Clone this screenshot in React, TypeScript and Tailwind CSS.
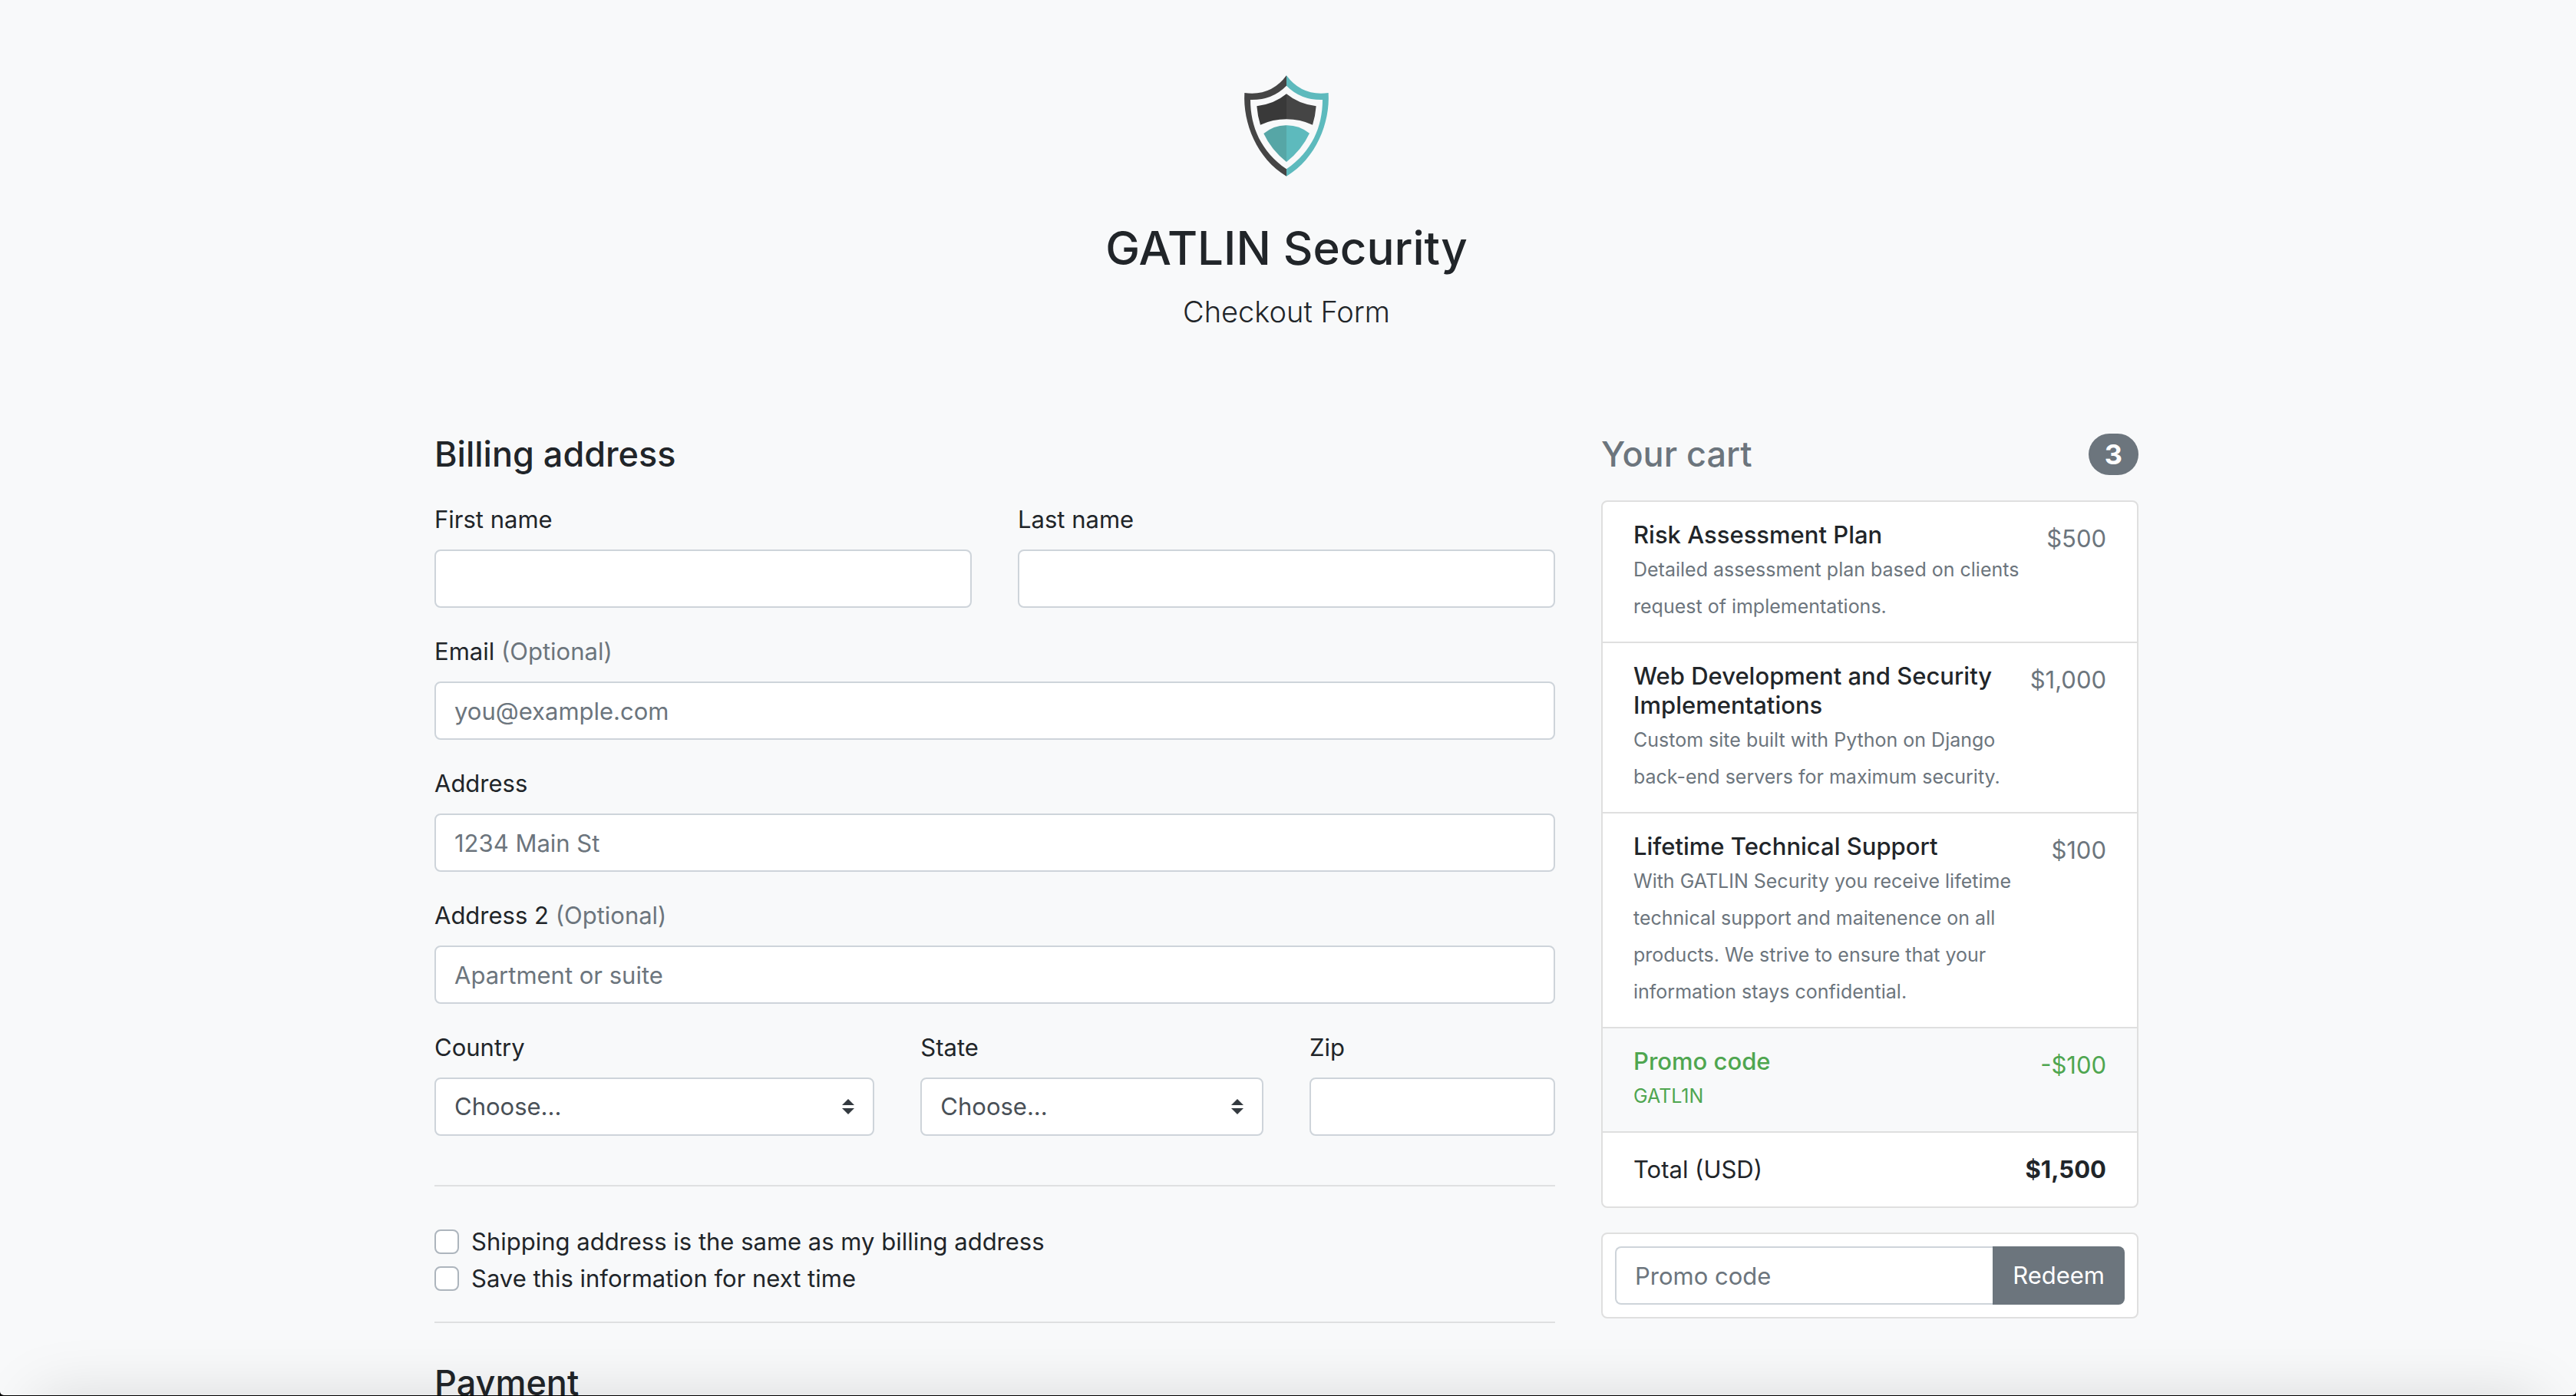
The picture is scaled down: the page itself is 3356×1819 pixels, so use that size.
import type { InputHTMLAttributes, ReactNode } from "react";

const control =
  "block h-[76px] w-full rounded-lg border-2 border-[#ced4da] bg-white px-6 text-[31px] text-[#495057] placeholder:text-[#6c757d] placeholder:opacity-100";

function Logo() {
  return (
    <svg className="mx-auto mb-[35px] h-[170px] w-[190px]" viewBox="3 0 570 510" role="img" aria-label="GATLIN Security shield">
      <path fill="#454545" d="M288 55Q228 137 124 123C117 240 172 380 288 449V421C188 352 147 255 147 150Q232 152 288 95Z" />
      <path fill="#5dbabd" d="M288 55Q348 137 452 123C459 240 404 380 288 449V421C388 352 429 255 429 150Q344 152 288 95Z" />
      <path fill="#393939" d="M288 127Q240 167 172 175Q175 213 186 248Q235 226 288 226Z" />
      <path fill="#454545" d="M288 127Q336 167 404 175Q401 213 390 248Q341 226 288 226Z" />
      <path fill="#56a6a6" d="M288 250Q240 249 199 282Q228 345 288 393Z" />
      <path fill="#5dbabd" d="M288 250Q336 249 378 281Q348 345 288 393Z" />
    </svg>
  );
}

type FieldProps = { id: string; label: string; optional?: boolean; className?: string; children: ReactNode };

function Field({ id, label, optional, className = "", children }: FieldProps) {
  return (
    <div className={`mb-8 ${className}`}>
      <label htmlFor={id} className="mb-[14px] block leading-[50px]">
        {label}
        {optional && <span className="text-[#6c757d]"> (Optional)</span>}
      </label>
      {children}
    </div>
  );
}

function TextInput(props: InputHTMLAttributes<HTMLInputElement>) {
  return <input type="text" className={control} {...props} />;
}

function Select({ id, options }: { id: string; options: string[] }) {
  return (
    <div className="relative">
      <select id={id} className={`${control} appearance-none`}>
        <option>Choose...</option>
        {options.map((o) => (
          <option key={o}>{o}</option>
        ))}
      </select>
      <svg className="pointer-events-none absolute top-7 right-[26px] h-5 w-4" viewBox="0 0 4 5" aria-hidden="true">
        <path fill="#343a40" d="M2 0L0 2h4zm0 5L0 3h4z" />
      </svg>
    </div>
  );
}

function Checkbox({ id, label }: { id: string; label: string }) {
  return (
    <div className="flex items-center gap-4">
      <input id={id} type="checkbox" className="size-8 appearance-none rounded-lg border-2 border-[#adb5bd] bg-white checked:bg-[#007bff]" />
      <label htmlFor={id} className="leading-[48px]">
        {label}
      </label>
    </div>
  );
}

const items = [
  { name: "Risk Assessment Plan", text: "Detailed assessment plan based on clients request of implementations.", price: "$500" },
  {
    name: "Web Development and Security Implementations",
    text: "Custom site built with Python on Django back-end servers for maximum security.",
    price: "$1,000",
  },
  {
    name: "Lifetime Technical Support",
    text: "With GATLIN Security you receive lifetime technical support and maitenence on all products. We strive to ensure that your information stays confidential.",
    price: "$100",
  },
];

export default function App() {
  return (
    <div className="h-screen overflow-hidden bg-black pb-px">
      <div className="relative h-full overflow-hidden rounded-b-[5px] bg-[#f8f9fa] pr-1 font-['Inter',sans-serif] text-[31px] text-[#212529]">
        <div className="mx-auto max-w-[2280px] px-[30px]">
          <header className="pt-20 pb-[126px] text-center">
            <Logo />
            <h1 className="mb-[14px] text-[60px] leading-[77px] font-medium">GATLIN Security</h1>
            <p className="text-[38px] leading-[60px] font-light">Checkout Form</p>
          </header>

          <div className="grid grid-cols-12 gap-x-[60px]">
            <main className="col-span-8">
              <h2 className="mb-[30px] text-[45px] leading-[60px] font-medium">Billing address</h2>
              <form>
                <div className="grid grid-cols-2 gap-x-[60px]">
                  <Field id="first" label="First name">
                    <TextInput id="first" />
                  </Field>
                  <Field id="last" label="Last name">
                    <TextInput id="last" />
                  </Field>
                </div>
                <Field id="email" label="Email" optional>
                  <TextInput id="email" type="email" placeholder="you@example.com" />
                </Field>
                <Field id="address" label="Address">
                  <TextInput id="address" placeholder="1234 Main St" />
                </Field>
                <Field id="address2" label="Address 2" optional>
                  <TextInput id="address2" placeholder="Apartment or suite" />
                </Field>
                <div className="grid grid-cols-12 gap-x-[60px]">
                  <Field id="country" label="Country" className="col-span-5">
                    <Select id="country" options={["United States"]} />
                  </Field>
                  <Field id="state" label="State" className="col-span-4">
                    <Select id="state" options={["California"]} />
                  </Field>
                  <Field id="zip" label="Zip" className="col-span-3">
                    <TextInput id="zip" />
                  </Field>
                </div>
                <hr className="mt-8 mb-12 border-t-2 border-[#dfe0e1]" />
                <Checkbox id="same" label="Shipping address is the same as my billing address" />
                <Checkbox id="save" label="Save this information for next time" />
                <hr className="mt-8 mb-12 border-t-2 border-[#dfe0e1]" />
                <h2 className="text-[45px] leading-[60px] font-medium">Payment</h2>
              </form>
            </main>

            <aside className="col-span-4">
              <h2 className="mb-[30px] flex items-center justify-between text-[45px] leading-[60px] font-medium text-[#6c757d]">
                Your cart
                <span className="rounded-full bg-[#6c757d] px-[21px] text-[36px] leading-[54px] font-bold text-white">3</span>
              </h2>
              <ul className="mb-8 divide-y-2 divide-[#dfdfdf] overflow-hidden rounded-lg border-2 border-[#dfdfdf] bg-white">
                {items.map((item) => (
                  <li key={item.name} className="flex justify-between px-10 pt-6 pb-[22px] leading-[48px]">
                    <div className="w-[512px]">
                      <h3 className="mb-0.5 leading-[38px] font-medium">{item.name}</h3>
                      <p className="text-[25px] leading-[48px] text-[#6c757d]">{item.text}</p>
                    </div>
                    <span className="text-[#6c757d]">{item.price}</span>
                  </li>
                ))}
                <li className="flex justify-between bg-[#f8f9fa] px-10 pt-6 pb-[22px] leading-[48px] text-[#4fa650]">
                  <div>
                    <h3 className="mb-0.5 leading-[38px] font-medium">Promo code</h3>
                    <p className="text-[25px] leading-[48px]">GATL1N</p>
                  </div>
                  <span>-$100</span>
                </li>
                <li className="flex justify-between px-10 py-6 leading-[48px]">
                  <span>Total (USD)</span>
                  <strong className="font-bold">$1,500</strong>
                </li>
              </ul>
              <form className="flex rounded-lg border-2 border-[#dfdfdf] bg-white p-4">
                <input
                  type="text"
                  aria-label="Promo code"
                  placeholder="Promo code"
                  className="h-[76px] min-w-0 flex-1 rounded-l-lg border-2 border-r-0 border-[#ced4da] bg-white px-6 text-[#495057] placeholder:text-[#6c757d] placeholder:opacity-100"
                />
                <button type="button" className="rounded-r-lg bg-[#6c757d] px-[26px] text-white">
                  Redeem
                </button>
              </form>
            </aside>
          </div>
        </div>
        <div className="pointer-events-none absolute inset-x-12 top-full h-40 shadow-[0_0_80px_rgba(0,0,0,0.13)]" />
      </div>
    </div>
  );
}
